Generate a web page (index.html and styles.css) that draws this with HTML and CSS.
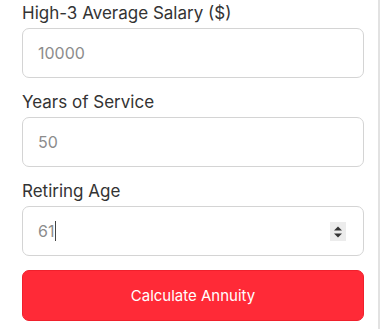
FILE: index.html
```html
<!DOCTYPE html>
<html lang="en">
<head>
    <meta charset="UTF-8">
    <meta name="viewport" content="width=device-width, initial-scale=1.0">
    <title>FERS Annuity</title>
    <link rel="stylesheet" href="styles.css">
</head>
<body>
    <div class="panel">
        <form class="annuity_form" onsubmit="return false">
            <div class="field">
                <label class="label" for="salary">High-3 Average Salary ($)</label>
                <input class="input" id="salary" type="number" value="10000">
            </div>
            <div class="field">
                <label class="label" for="years">Years of Service</label>
                <input class="input" id="years" type="number" value="50">
            </div>
            <div class="field">
                <label class="label" for="age">Retiring Age</label>
                <div class="input_wrap">
                    <input class="input" id="age" type="number" value="61">
                    <span class="caret"></span>
                    <span class="spinner">
                        <svg width="10" height="14" viewBox="0 0 10 14">
                            <path d="M1 5.5 L5 1.5 L9 5.5 Z" fill="#333"/>
                            <path d="M1 8.5 L5 12.5 L9 8.5 Z" fill="#333"/>
                        </svg>
                    </span>
                </div>
            </div>
            <button class="button" type="submit">Calculate Annuity</button>
        </form>
    </div>
</body>
</html>
```
FILE: styles.css
```css
body {
    margin: 0;
    background: #fff;
    font-family: Inter, "Noto Sans", sans-serif;
}
.panel {
    width: 378px;
    height: 329px;
    border-right: 2px solid #e2e2e2;
    overflow: hidden;
}
.annuity_form {
    width: 342px;
    margin-left: 22px;
    padding-top: 1px;
}
.field {
    margin-bottom: 12px;
}
.label {
    display: block;
    font-size: 17px;
    line-height: 24px;
    color: #333;
    margin-bottom: 3px;
}
.input_wrap {
    position: relative;
}
.input {
    box-sizing: border-box;
    display: block;
    width: 100%;
    height: 50px;
    padding: 0 15px;
    font-family: Inter, "Noto Sans", sans-serif;
    font-size: 16px;
    color: #8c8c8c;
    background: #fff;
    border: 1px solid #d4d4d4;
    border-radius: 7px;
    outline: none;
}
.input::-webkit-outer-spin-button,
.input::-webkit-inner-spin-button {
    -webkit-appearance: none;
    margin: 0;
}
.caret {
    position: absolute;
    left: 33px;
    top: 15px;
    width: 1px;
    height: 20px;
    background: #444;
}
.spinner {
    position: absolute;
    right: 18px;
    top: 16px;
    width: 16px;
    height: 19px;
    background: #ececec;
    display: flex;
    align-items: center;
    justify-content: center;
}
.button {
    display: block;
    width: 100%;
    height: 51px;
    margin-top: 14px;
    font-family: Inter, "Noto Sans", sans-serif;
    font-size: 15px;
    color: #fff;
    background: #ff2a37;
    border: 1px solid #f0202c;
    border-radius: 7px;
    cursor: pointer;
}
```
